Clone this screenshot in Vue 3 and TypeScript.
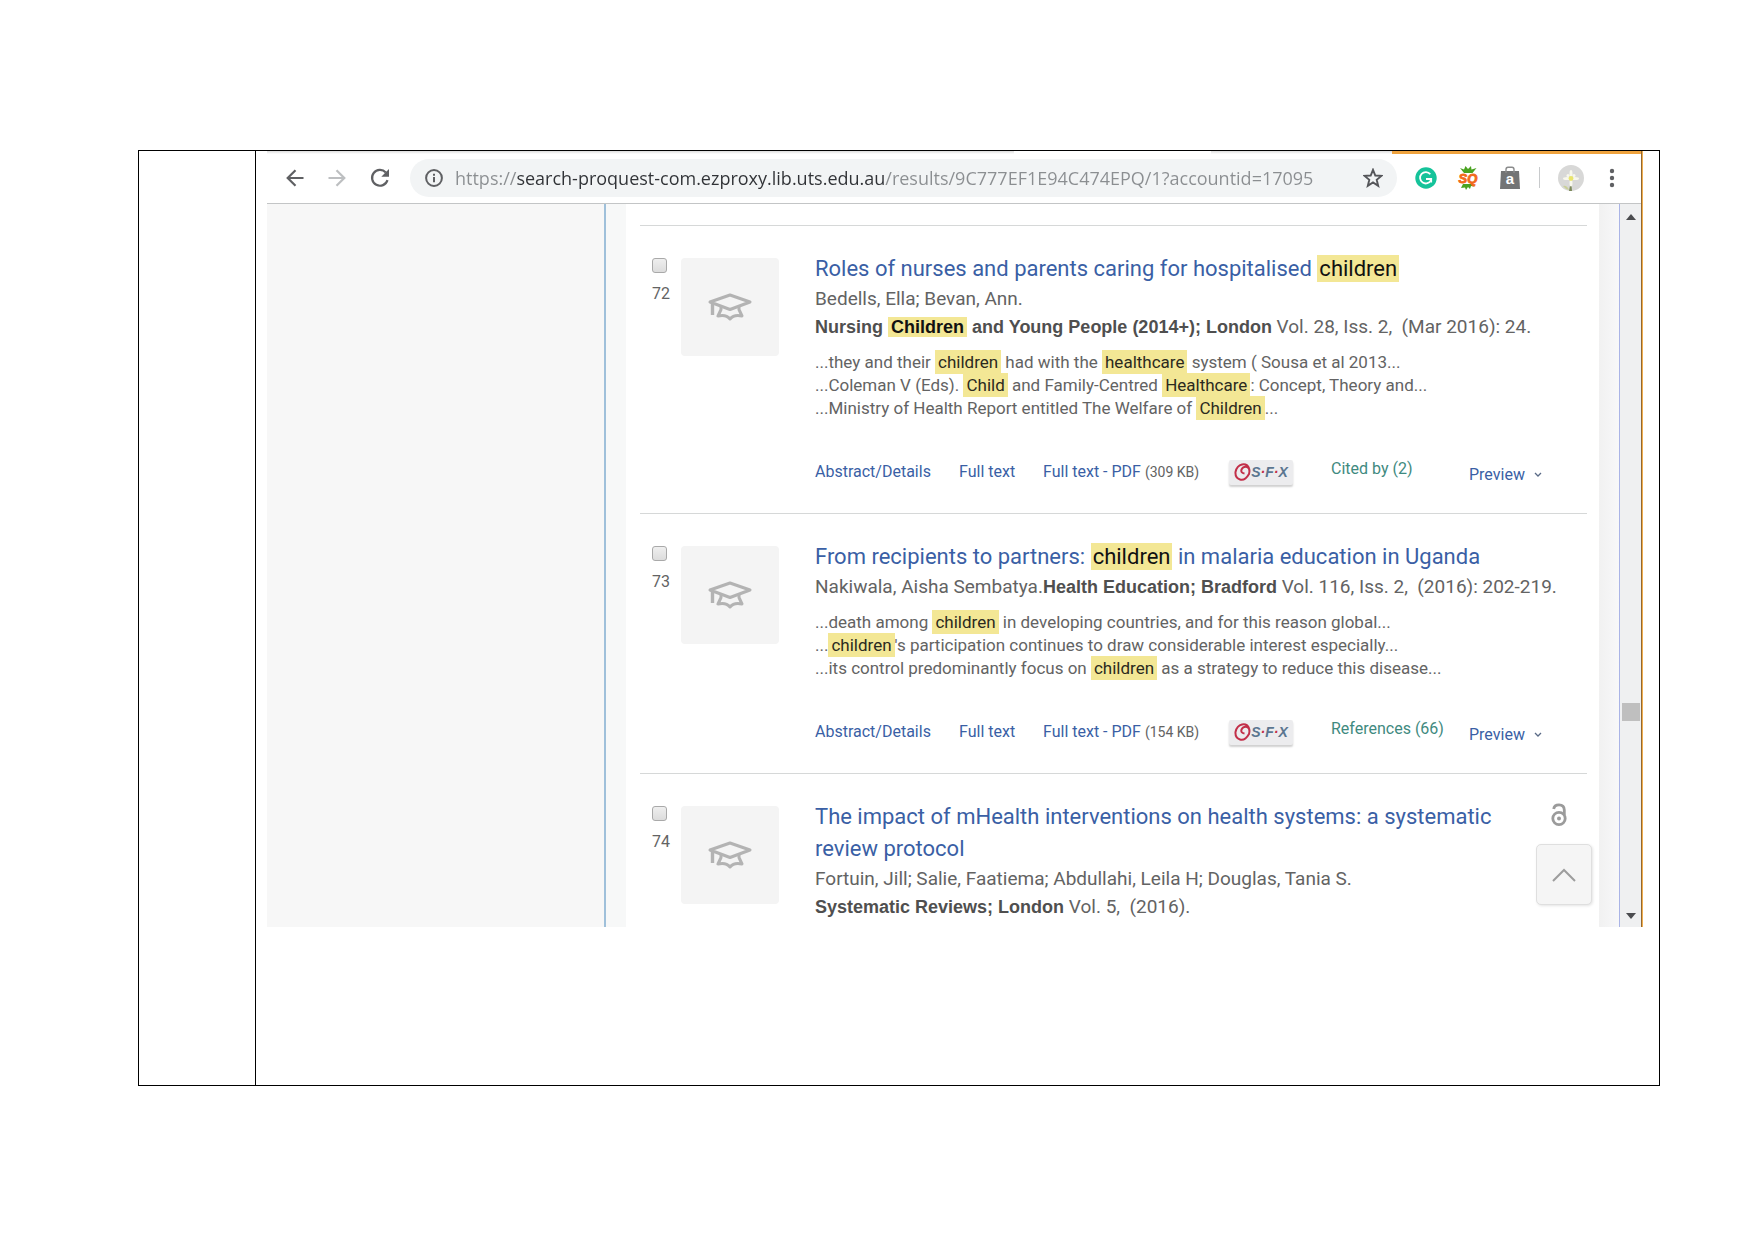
<script setup lang="ts">
import { ref } from 'vue'

interface Segment {
  text: string
  hit: boolean
}

interface Result {
  id: number
  title: string
  authors: string
  sameLine: boolean
  journal: string
  issue: string
  snippets: string[]
  pdfSize?: string
  cites?: string
  openAccess?: boolean
}

const url = ref('https://search-proquest-com.ezproxy.lib.uts.edu.au/results/9C777EF1E94C474EPQ/1?accountid=17095')

// Search hits are wrapped in braces inside the result texts.
const results: Result[] = [
  {
    id: 72,
    title: 'Roles of nurses and parents caring for hospitalised {children}',
    authors: 'Bedells, Ella; Bevan, Ann.',
    sameLine: false,
    journal: 'Nursing {Children} and Young People (2014+); London',
    issue: 'Vol. 28, Iss. 2,\u00a0 (Mar 2016): 24.',
    snippets: [
      '...they and their {children} had with the {healthcare} system ( Sousa et al 2013...',
      '...Coleman V (Eds). {Child} and Family-Centred {Healthcare}: Concept, Theory and...',
      '...Ministry of Health Report entitled The Welfare of {Children}...',
    ],
    pdfSize: '(309 KB)',
    cites: 'Cited by (2)',
  },
  {
    id: 73,
    title: 'From recipients to partners: {children} in malaria education in Uganda',
    authors: 'Nakiwala, Aisha Sembatya.',
    sameLine: true,
    journal: 'Health Education; Bradford',
    issue: 'Vol. 116, Iss. 2,\u00a0 (2016): 202-219.',
    snippets: [
      '...death among {children} in developing countries, and for this reason global...',
      "...{children}'s participation continues to draw considerable interest especially...",
      '...its control predominantly focus on {children} as a strategy to reduce this disease...',
    ],
    pdfSize: '(154 KB)',
    cites: 'References (66)',
  },
  {
    id: 74,
    title: 'The impact of mHealth interventions on health systems: a systematic review protocol',
    authors: 'Fortuin, Jill; Salie, Faatiema; Abdullahi, Leila H; Douglas, Tania S.',
    sameLine: false,
    journal: 'Systematic Reviews; London',
    issue: 'Vol. 5,\u00a0 (2016).',
    snippets: [],
    openAccess: true,
  },
]

function segments(source: string): Segment[] {
  return source
    .split(/(\{[^}]*\})/)
    .filter((part) => part.length > 0)
    .map((part) =>
      part.startsWith('{') ? { text: part.slice(1, -1), hit: true } : { text: part, hit: false },
    )
}
</script>

<template>
  <div class="sheet">
    <div class="side-cell"></div>
    <div class="main-cell">
      <section class="browser">
        <div class="strip"><i class="tab-edge"></i><i class="tab-active"></i><i class="tab-edge short"></i><i class="theme"></i></div>
        <header class="toolbar">
          <div class="nav">
            <button type="button" aria-label="Back">
              <svg width="18" height="18" viewBox="0 0 18 18"><path d="M17.500 9H2M9.500 1.200L1.700 9l7.800 7.800" fill="none" stroke="#5f6063" stroke-width="2.200" /></svg>
            </button>
            <button type="button" aria-label="Forward">
              <svg width="18" height="18" viewBox="0 0 18 18"><path d="M.5 9H16M8.500 1.200L16.300 9l-7.800 7.800" fill="none" stroke="#bdbfc1" stroke-width="2.200" /></svg>
            </button>
            <button type="button" aria-label="Reload">
              <svg width="20" height="20" viewBox="0 0 20 20"><path d="M17.500 12.200A7.900 7.900 0 1 1 15.800 4.500" fill="none" stroke="#5f6063" stroke-width="2.200" /><path d="M19 1v7.700h-7.700z" fill="#5f6063" /></svg>
            </button>
          </div>
          <div class="omnibox">
            <svg width="18" height="18" viewBox="0 0 18 18"><circle cx="9" cy="9" r="7.900" fill="none" stroke="#5f6063" stroke-width="2" /><path d="M9 8v5.200M9 4.700v2" stroke="#5f6063" stroke-width="2" /></svg>
            <input v-model="url" class="url" type="text" aria-label="Address" spellcheck="false" />
            <button type="button" aria-label="Bookmark">
              <svg width="20" height="20" viewBox="0 0 20 20"><path d="M10 1.800l2.300 5.700 6.100.4-4.700 3.900 1.500 6L10 14.500l-5.200 3.300 1.500-6L1.600 7.900l6.100-.4z" fill="none" stroke="#55565a" stroke-width="1.900" /></svg>
            </button>
          </div>
          <div class="extensions">
            <button type="button" aria-label="Grammar checker">
              <svg width="22" height="22" viewBox="0 0 22 22"><circle cx="11" cy="11" r="10.700" fill="#15c39a" /><path d="M15.300 7.300A5.700 5.700 0 1 0 16 13" fill="none" stroke="#fff" stroke-width="1.800" /><path d="M11 12h5.200v3.500" fill="none" stroke="#fff" stroke-width="1.800" /></svg>
            </button>
            <button type="button" aria-label="SQ extension">
              <svg width="22" height="24" viewBox="0 0 22 24"><path d="M3 2l4 1.500L8.500 0 11 3l3-3 .5 3.500 5-1.500-4 5H7zM6 18h10l1.500 2.500-3.500-.5-1 3-2-2-2 3-1-2.500-4 .5z" fill="#4aa321" /><text x="11" y="17" text-anchor="middle" font-family="Liberation Sans, sans-serif" font-size="13" font-weight="700" font-style="italic" fill="#f26a1b" stroke="#f26a1b" stroke-width=".8">SQ</text></svg>
            </button>
            <button type="button" aria-label="Shopping assistant">
              <svg width="22" height="24" viewBox="0 0 22 24"><path d="M2 5h18l1 18H1z" fill="#737475" /><path d="M7 7V3.500Q7 1.300 9 1.300h4q2 0 2 2.200V7" fill="none" stroke="#8a8b8c" stroke-width="1.400" /><text x="11" y="18" text-anchor="middle" font-family="Liberation Sans, sans-serif" font-size="15" font-weight="700" fill="#fff">a</text></svg>
            </button>
            <span class="divider"></span>
            <button type="button" class="profile" aria-label="Profile">
              <svg width="26" height="26" viewBox="0 0 26 26"><circle cx="13" cy="13" r="13" fill="#d8d8d7" /><path d="M13 15l1 11h-3z" fill="#7d8a5c" /><path d="M5 21q4-1 6 4-4-1-6-4z" fill="#c9cf9a" /><g fill="#f8f8ec"><ellipse cx="13" cy="9" rx="1.500" ry="4" /><ellipse cx="13" cy="18" rx="1.500" ry="3.500" /><ellipse cx="9" cy="13.500" rx="4" ry="1.500" /><ellipse cx="17" cy="13.500" rx="4" ry="1.500" /><circle cx="10" cy="10.500" r="1.500" /><circle cx="16" cy="10.500" r="1.500" /></g><circle cx="13" cy="13.500" r="2.400" fill="#e9e56c" /></svg>
            </button>
            <button type="button" aria-label="Menu">
              <svg width="6" height="20" viewBox="0 0 6 20"><g fill="#5f6063"><circle cx="3" cy="3" r="2.200" /><circle cx="3" cy="10" r="2.200" /><circle cx="3" cy="17" r="2.200" /></g></svg>
            </button>
          </div>
        </header>

        <div class="viewport">
          <aside class="rail"></aside>
          <main class="page">
            <article v-for="item in results" :key="item.id" class="result">
              <div class="pick">
                <input :id="`pick-${item.id}`" type="checkbox" />
                <label :for="`pick-${item.id}`">{{ item.id }}</label>
              </div>
              <div class="thumb">
                <svg width="44" height="28" viewBox="0 0 44 28"><g fill="none" stroke="#b3b3b3" stroke-width="3" stroke-linejoin="round"><path d="M2 9L22 2l20 7-20 7.500z" /><path d="M4.500 10v12" stroke-width="3.400" /><path d="M13 13.500v3l-3 6.500q8-2 12 3 4-5 12-3l-3-6.500v-3" /></g></svg>
              </div>
              <div class="body">
                <div class="heading">
                  <h3><a href="#"><template v-for="(s, i) in segments(item.title)" :key="i"><mark v-if="s.hit">{{ s.text }}</mark><template v-else>{{ s.text }}</template></template></a></h3>
                  <svg v-if="item.openAccess" class="lock" width="16" height="24" viewBox="0 0 16 24"><g fill="none" stroke="#9b9b9b" stroke-width="2.800"><circle cx="8" cy="15.500" r="6.200" /><path d="M2.700 6Q3.200 1.800 8 1.800q5.300 0 5.300 5.200v5" /></g><circle cx="8" cy="15.500" r="2" fill="#9b9b9b" /></svg>
                </div>
                <p class="source">{{ item.authors }}<br v-if="!item.sameLine" /><b><template v-for="(s, i) in segments(item.journal)" :key="i"><mark v-if="s.hit">{{ s.text }}</mark><template v-else>{{ s.text }}</template></template></b> {{ item.issue }}</p>
                <div v-if="item.snippets.length" class="snippets">
                  <p v-for="(line, n) in item.snippets" :key="n"><template v-for="(s, i) in segments(line)" :key="i"><mark v-if="s.hit">{{ s.text }}</mark><template v-else>{{ s.text }}</template></template></p>
                </div>
                <div v-if="item.cites" class="actions">
                  <a href="#">Abstract/Details</a>
                  <a href="#">Full text</a>
                  <span><a href="#">Full text - PDF</a> <small>{{ item.pdfSize }}</small></span>
                  <button type="button" class="sfx">
                    <svg width="17" height="18" viewBox="0 0 17 18"><path d="M15 5Q13 .5 8 1.500T1.500 9Q1 15 6 16.500T15 11Q16.500 5 13 4T7.500 6.500Q6.500 10 10.500 10.500" fill="none" stroke="#c22f49" stroke-width="2" /></svg>
                    <span>S<i>·</i>F<i>·</i>X</span>
                  </button>
                  <a href="#" class="cites">{{ item.cites }}</a>
                  <button type="button" class="preview">
                    Preview
                    <svg width="8" height="6" viewBox="0 0 8 6"><path d="M1 1l3 3 3-3" fill="none" stroke="#5a6a86" stroke-width="1.300" /></svg>
                  </button>
                </div>
              </div>
            </article>
            <button type="button" class="to-top" aria-label="Back to top">
              <svg width="24" height="14" viewBox="0 0 24 14"><path d="M1 13L12 2l11 11" fill="none" stroke="#9d9d9d" stroke-width="2" /></svg>
            </button>
          </main>
          <div class="gutter"></div>
          <div class="scrollbar">
            <svg width="10" height="6" viewBox="0 0 10 6"><path d="M0 6l5-6 5 6z" fill="#4b4c4f" /></svg>
            <span class="handle"></span>
            <svg width="10" height="6" viewBox="0 0 10 6"><path d="M0 0l5 6 5-6z" fill="#4b4c4f" /></svg>
          </div>
        </div>
      </section>
    </div>
  </div>
</template>

<style>
body {
  margin: 0;
  background: #fff;
}
</style>

<style scoped>
* {
  box-sizing: border-box;
}
button {
  display: flex;
  align-items: center;
  padding: 0;
  border: 0;
  background: none;
  font: inherit;
  color: inherit;
}
svg {
  display: block;
  flex: none;
}
a {
  color: #3a5fa5;
  text-decoration: none;
}
p,
h3 {
  margin: 0;
}
.sheet {
  display: flex;
  margin: 150px 94px 0 138px;
  border: 1px solid #000;
  font-family: Roboto, "Liberation Sans", sans-serif;
  color: #636363;
}
.side-cell {
  flex: none;
  width: 117px;
  border-right: 1px solid #000;
}
.main-cell {
  flex: 1;
  min-width: 0;
  padding: 0 17px 158px 11px;
}
.browser {
  border-right: 1px solid #94682f;
  box-shadow: 1px 0 #efae50;
}
.strip {
  display: flex;
  height: 3px;
}
.tab-edge {
  flex: 744;
  background: linear-gradient(#dcdcdc, #fff);
}
.tab-edge.short {
  flex: 180;
}
.tab-active {
  flex: 196;
}
.theme {
  flex: 248;
  background: #efa33e;
}
.toolbar {
  display: flex;
  align-items: center;
  height: 50px;
  padding: 0 26px 2px 19px;
  border-bottom: 1px solid #c3c5c6;
}
.nav {
  display: flex;
  align-items: center;
  gap: 24px;
  width: 124px;
}
.omnibox {
  display: flex;
  flex: 1;
  align-items: center;
  gap: 12px;
  min-width: 0;
  height: 38px;
  padding: 0 14px 0 15px;
  border-radius: 19px;
  background: #f2f4f5;
}
/* The host is darker than the scheme and the path around it. */
.url {
  flex: 1;
  min-width: 0;
  padding: 0;
  border: 0;
  outline: 0;
  font: 18px/26px "Open Sans", sans-serif;
  color: #8b8e91;
  background: linear-gradient(90deg, #8b8e91 61px, #303236 61px, #303236 429px, #8b8e91 429px);
  background-clip: text;
  -webkit-text-fill-color: transparent;
}
.extensions {
  display: flex;
  align-items: center;
  gap: 20px;
  margin-left: 18px;
}
.divider {
  width: 1px;
  height: 21px;
  margin: 0 -2px;
  background: #c8cacc;
}
.profile {
  margin-right: 5px;
}
.viewport {
  display: flex;
  align-items: stretch;
}
.rail {
  flex: none;
  width: 339px;
  border-right: 2px solid #9fc0da;
  background: #f7f7f7;
}
.page {
  position: relative;
  flex: 1;
  min-width: 0;
  margin-left: 20px;
  padding: 21px 12px 0 14px;
  box-shadow: -20px 0 #f7f8f8;
}
.gutter {
  width: 20px;
  background: linear-gradient(90deg, #f1f1f1, #f8f8f9);
}
.scrollbar {
  position: relative;
  display: flex;
  flex-direction: column;
  align-items: center;
  justify-content: space-between;
  width: 22px;
  padding: 10px 0 8px;
  border-left: 1px solid #aab4e6;
  background: #eff0f1;
}
.handle {
  position: absolute;
  top: 69%;
  left: 2px;
  width: 18px;
  height: 18px;
  background: #bfbfbf;
}
.result {
  display: flex;
  padding-left: 12px;
  border-top: 1px solid #d6d8d8;
}
.pick {
  display: flex;
  flex-direction: column;
  gap: 11px;
  width: 29px;
  padding-top: 32px;
  font-size: 16px;
  line-height: 20px;
}
.pick input {
  appearance: none;
  width: 15px;
  height: 15px;
  margin: 0;
  border: 1px solid #a9a9a9;
  border-radius: 3px;
  background: linear-gradient(#efefef, #dcdcdc);
}
.thumb {
  display: flex;
  flex: none;
  align-items: center;
  justify-content: center;
  width: 98px;
  height: 98px;
  margin-top: 32px;
  border-radius: 4px;
  background: #f4f4f4;
}
.body {
  flex: 1;
  min-width: 0;
  margin-left: 36px;
  padding-top: 27px;
  padding-bottom: 6px;
}
.heading {
  display: flex;
  justify-content: space-between;
  gap: 50px;
  padding-right: 20px;
}
h3 {
  font-size: 22px;
  font-weight: 400;
  line-height: 32px;
}
.lock {
  margin-top: 2px;
}
mark {
  padding: 2px 3px;
  background: #f3e795;
  color: #2b2a20;
}
h3 mark {
  padding: 1px 2px;
  color: #111;
}
.source {
  font-size: 19px;
  line-height: 28px;
  white-space: nowrap;
}
.source b {
  font-family: "Liberation Sans", sans-serif;
  font-size: 18px;
  color: #4f4f4f;
}
.source mark {
  padding: 0 3px;
  color: #111;
}
.snippets {
  margin-top: 10px;
  font-size: 17px;
  line-height: 23px;
}
.actions {
  display: grid;
  grid-template-columns: 144px 84px 186px 102px 138px auto;
  justify-content: start;
  align-items: center;
  margin-top: 39px;
  margin-bottom: 22px;
  height: 26px;
  font-size: 16px;
  line-height: 20px;
}
.actions small {
  font-size: 14px;
}
.sfx {
  justify-content: center;
  width: 64px;
  height: 25px;
  border-radius: 2px;
  background: #ececee;
  box-shadow: 0 2px 2px #d0d0d0;
  font: italic 700 14px/20px "Liberation Sans", sans-serif;
  color: #5b7690;
}
.sfx i {
  color: #c22f49;
}
.cites {
  align-self: start;
  color: #3f8a80;
}
.preview {
  align-self: end;
  gap: 9px;
  color: #3a5fa5;
}
.to-top {
  position: absolute;
  right: 7px;
  bottom: 22px;
  justify-content: center;
  width: 56px;
  height: 61px;
  border: 1px solid #dfdfdf;
  border-radius: 5px;
  background: #f5f5f5;
  box-shadow: 1px 1px 3px #e4e4e4;
}
</style>
